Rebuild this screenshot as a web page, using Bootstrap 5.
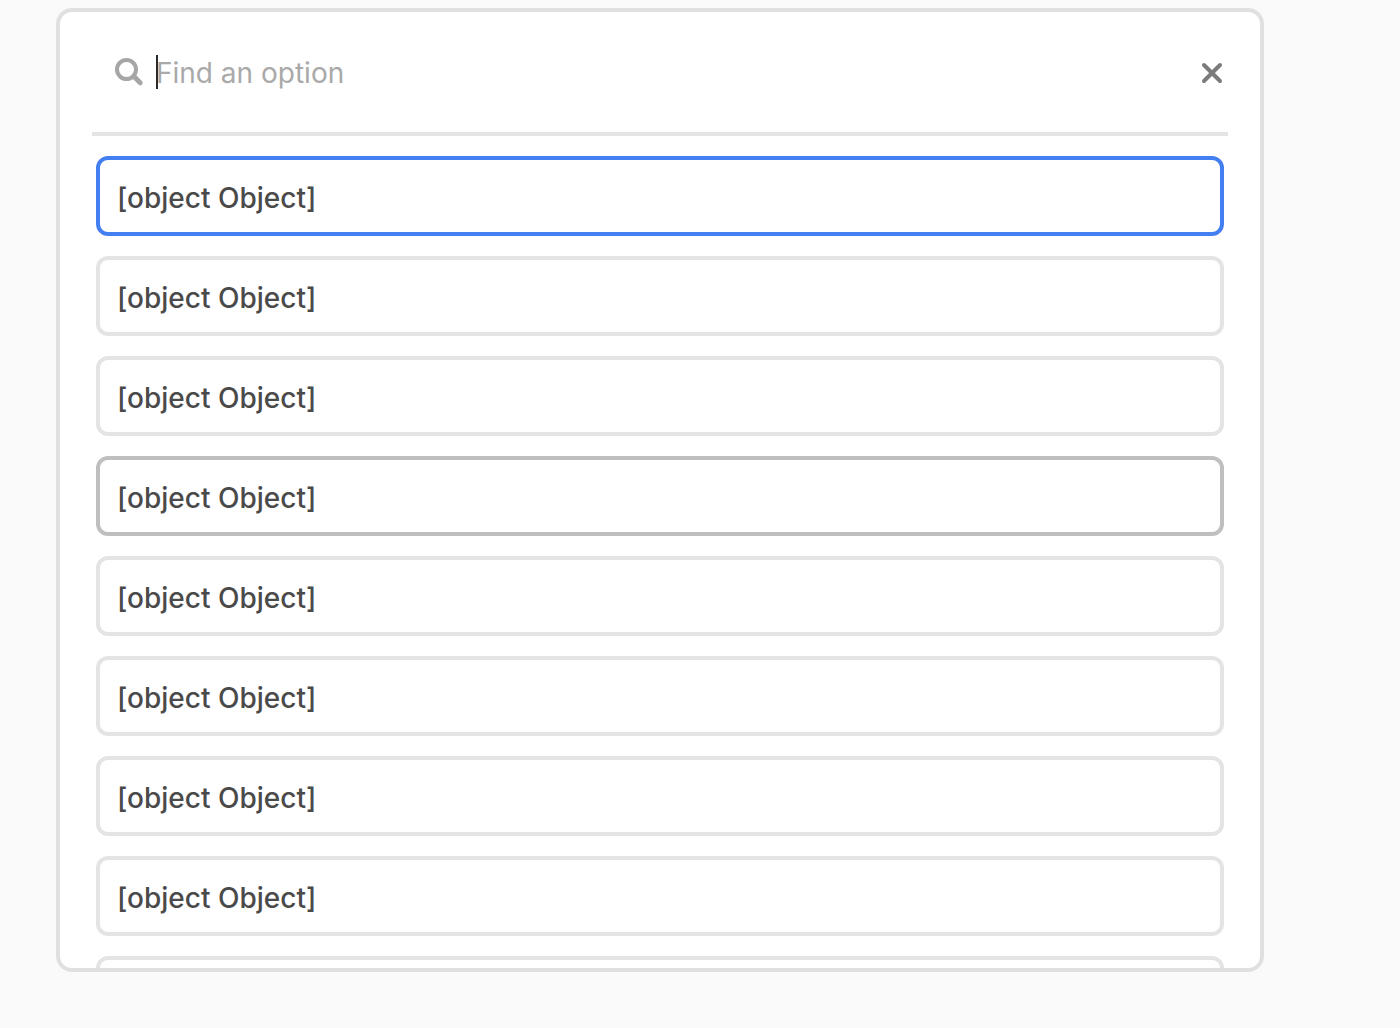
<!DOCTYPE html>
<html lang="en">
<head>
<meta charset="utf-8">
<meta name="viewport" content="width=device-width, initial-scale=1">
<title>Find an option</title>
<link href="https://cdn.jsdelivr.net/npm/bootstrap@5.3.0/dist/css/bootstrap.min.css" rel="stylesheet">
<style>
  body { background: #fafafa; font-family: Inter, "Liberation Sans", sans-serif; font-size: 28px; line-height: 36px; }
  .page { padding: 8px 136px 56px 56px; }
  .picker { border: 4px solid #e0e0e0; border-radius: 16px; padding: 0 32px; }
  .picker-head { height: 124px; border-bottom: 4px solid #e4e4e4; padding: 0 4px 0 22px; }
  .picker-input { font-size: 28px; line-height: 36px; padding: 2px 0 0; color: #4a4a4a; }
  .picker-input::placeholder { color: #a9a9a9; opacity: 1; }
  .caret-bar { left: 0; top: 2px; width: 2px; height: 34px; background: #2b2b2b; }
  .picker-close { width: 24px; height: 24px; }
  .options { gap: 20px; padding: 20px 4px 0; min-height: 0; }
  .option { height: 80px; border: 4px solid #e4e4e4; border-radius: 12px; padding: 4px 17px 0; color: #4a4a4a; font-weight: 500; }
  .option.is-selected { border-color: #437ff1; }
  .option.is-hovered { border-color: #bfbfbf; }
</style>
<script src="https://cdn.jsdelivr.net/npm/bootstrap@5.3.0/dist/js/bootstrap.bundle.min.js"></script>
</head>
<body>
<main class="page vh-100">
  <section class="picker d-flex flex-column h-100 bg-white overflow-hidden">
    <div class="picker-head d-flex align-items-center flex-shrink-0">
      <label for="find" class="d-flex me-2 pe-1" aria-label="Find an option">
        <svg width="30" height="30" viewBox="0 0 30 30" fill="none" stroke="#a6a6a6" aria-hidden="true">
          <circle cx="12.500" cy="12.500" r="9.500" stroke-width="4"/>
          <path d="M18.500 18.500L21 21" stroke-width="4"/>
          <path d="M20.500 20L26.200 25.700" stroke-width="5" stroke-linecap="round"/>
        </svg>
      </label>
      <div class="position-relative flex-grow-1">
        <input id="find" type="text" class="picker-input d-block w-100 border-0 bg-transparent" placeholder="Find an option">
        <span class="caret-bar position-absolute"></span>
      </div>
      <button type="button" class="picker-close d-flex border-0 p-0 bg-transparent" aria-label="Close">
        <svg width="24" height="24" viewBox="0 0 24 24" fill="none" stroke="#7b7b7b" stroke-width="4" stroke-linecap="round" aria-hidden="true"><path d="M4 5L20 21M20 5L4 21"/></svg>
      </button>
    </div>
    <div class="options d-flex flex-column overflow-hidden">
      <button type="button" class="option is-selected flex-shrink-0 bg-white text-start">[object Object]</button>
      <button type="button" class="option flex-shrink-0 bg-white text-start">[object Object]</button>
      <button type="button" class="option flex-shrink-0 bg-white text-start">[object Object]</button>
      <button type="button" class="option is-hovered flex-shrink-0 bg-white text-start">[object Object]</button>
      <button type="button" class="option flex-shrink-0 bg-white text-start">[object Object]</button>
      <button type="button" class="option flex-shrink-0 bg-white text-start">[object Object]</button>
      <button type="button" class="option flex-shrink-0 bg-white text-start">[object Object]</button>
      <button type="button" class="option flex-shrink-0 bg-white text-start">[object Object]</button>
      <button type="button" class="option flex-shrink-0 bg-white text-start" aria-label="More options"></button>
    </div>
  </section>
</main>
</body>
</html>
